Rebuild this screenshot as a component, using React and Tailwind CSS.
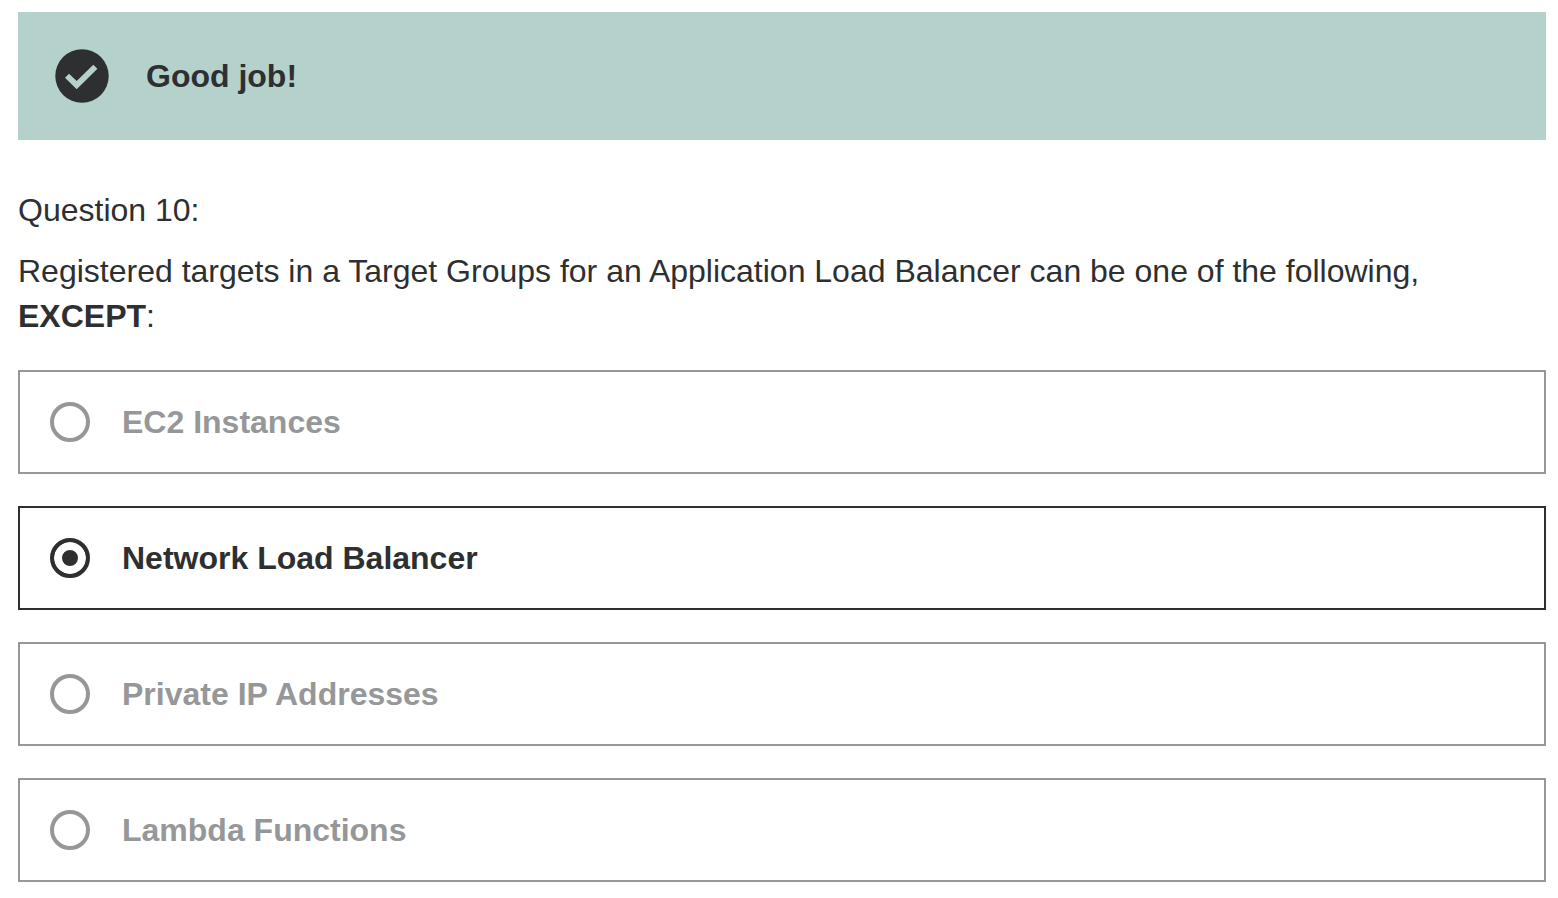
const options = [
  { id: 'ec2', label: 'EC2 Instances' },
  { id: 'nlb', label: 'Network Load Balancer' },
  { id: 'ip', label: 'Private IP Addresses' },
  { id: 'lambda', label: 'Lambda Functions' },
];
const selected = 'nlb';

function CheckIcon() {
  return (
    <svg viewBox="0 0 54 54" className="size-[54px] shrink-0" aria-hidden="true">
      <circle cx="27" cy="27" r="26.7" fill="#2d2f31" />
      <path d="M10 28.7 L14 24.8 L21.7 32.1 L38.3 15.8 L42.4 19.7 L21.7 40.2 Z" fill="#b5d1cc" />
    </svg>
  );
}

function Option({ id, label, checked }) {
  return (
    <label
      htmlFor={id}
      className={
        checked
          ? 'flex min-h-26 items-center gap-8 border-2 border-[#2d2f31] px-[30px] text-[#2d2f31]'
          : 'flex min-h-26 items-center gap-8 border-2 border-[#969798] px-[30px] text-[#969798]'
      }
    >
      <input
        id={id}
        type="radio"
        name="answer"
        defaultChecked={checked}
        className="size-10 shrink-0 appearance-none rounded-full border-4 border-current bg-white checked:bg-[#2d2f31] checked:shadow-[inset_0_0_0_8px_#ffffff]"
      />
      <span className="text-[32px] leading-11 font-bold">{label}</span>
    </label>
  );
}

export default function App() {
  return (
    <main className="min-h-screen bg-white pt-3 pr-3 pb-4 pl-[18px] font-['Liberation_Sans',Arial,sans-serif] text-[#2d2f31]">
      <div role="status" className="flex min-h-32 items-center gap-[37px] bg-[#b5d1cc] px-[37px]">
        <CheckIcon />
        <p className="text-[32px] leading-11 font-bold">Good job!</p>
      </div>
      <form className="pt-12">
        <p className="text-[32px] leading-11">Question 10:</p>
        <p className="mt-[17px] text-[32px] leading-[45px]">
          Registered targets in a Target Groups for an Application Load Balancer can be one of the following, <strong>EXCEPT</strong>:
        </p>
        <div className="mt-[31px] flex flex-col gap-8">
          {options.map((option) => (
            <Option key={option.id} id={option.id} label={option.label} checked={option.id === selected} />
          ))}
        </div>
      </form>
    </main>
  );
}
